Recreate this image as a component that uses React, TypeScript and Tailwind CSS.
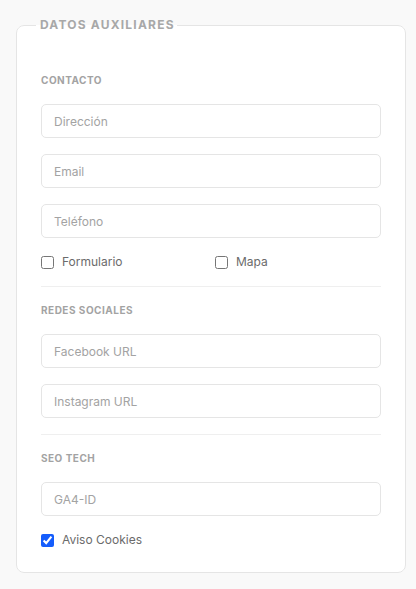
import React from "react";

function Field({ placeholder }: { placeholder: string }) {
  return (
    <input
      type="text"
      placeholder={placeholder}
      className="w-full h-[34px] rounded-[5px] border border-[#e5e5e5] bg-white px-3 text-xs text-neutral-700 placeholder:text-[#a3a3a3] focus:outline-none"
    />
  );
}

function Check({ label, checked = false }: { label: string; checked?: boolean }) {
  return (
    <label className="flex items-center gap-2 h-4 text-xs text-[#6b6b6b]">
      <input type="checkbox" defaultChecked={checked} className="m-0 w-[13px] h-[13px] accent-blue-600" />
      {label}
    </label>
  );
}

function SectionLabel({ children }: { children: React.ReactNode }) {
  return <h3 className="text-[10px] leading-[15px] font-bold tracking-wider text-[#a3a3a3]">{children}</h3>;
}

export default function App() {
  return (
    <div className="min-h-[589px] bg-[#f9f9f9] pt-[17px] pl-4" style={{ fontFamily: "Inter, 'Noto Sans', sans-serif" }}>
      <fieldset className="w-[390px] rounded-lg border border-[#e5e5e5] bg-white px-6 pb-6 pt-10">
        <legend className="-ml-[5px] pl-1 pr-0.5 text-xs leading-4 font-bold tracking-widest text-[#a8a8a8]">DATOS AUXILIARES</legend>

        <div className="flex flex-col gap-4">
          <SectionLabel>CONTACTO</SectionLabel>
          <Field placeholder="Dirección" />
          <Field placeholder="Email" />
          <Field placeholder="Teléfono" />
          <div className="grid grid-cols-2 gap-2">
            <Check label="Formulario" />
            <Check label="Mapa" />
          </div>

          <hr className="border-[#efefef]" />

          <SectionLabel>REDES SOCIALES</SectionLabel>
          <Field placeholder="Facebook URL" />
          <Field placeholder="Instagram URL" />

          <hr className="border-[#efefef]" />

          <SectionLabel>SEO TECH</SectionLabel>
          <Field placeholder="GA4-ID" />
          <Check label="Aviso Cookies" checked />
        </div>
      </fieldset>
    </div>
  );
}
